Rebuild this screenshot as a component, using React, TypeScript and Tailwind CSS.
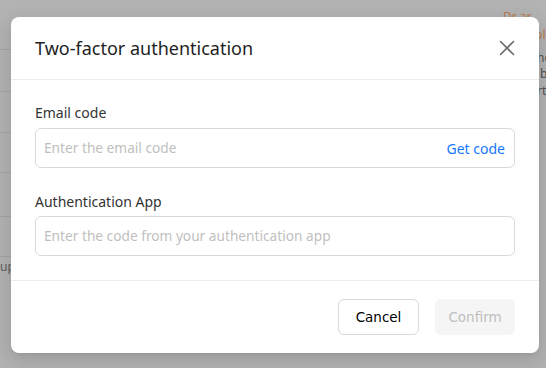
import React from "react";

function CloseIcon() {
  return (
    <svg width="16" height="16" viewBox="0 0 16 16" fill="none">
      <path d="M1.5 1.5 L14.5 14.5 M14.5 1.5 L1.5 14.5" stroke="#6b6b6b" strokeWidth="1.6" strokeLinecap="round" />
    </svg>
  );
}

export default function App() {
  const font = { fontFamily: '"Noto Sans", "Open Sans", Arial, sans-serif' };
  return (
    <div className="relative h-[368px] w-[546px] overflow-hidden bg-[#b3b3b3]" style={font}>
      {/* underlying page, dimmed by the overlay */}
      <div className="absolute inset-0">
        <div className="absolute left-0 top-[49px] h-px w-[12px] bg-[#a3a3a3]" />
        <div className="absolute left-0 top-[91px] h-px w-[12px] bg-[#a3a3a3]" />
        <div className="absolute left-0 top-[132px] h-px w-[12px] bg-[#a3a3a3]" />
        <div className="absolute left-0 top-[172px] h-px w-[12px] bg-[#a3a3a3]" />
        <div className="absolute left-0 top-[216px] h-px w-[12px] bg-[#a3a3a3]" />
        <div className="absolute left-0 top-[256px] h-px w-[12px] bg-[#a3a3a3]" />
        <span className="absolute left-0 top-[259px] text-[12px] leading-[16px] text-[#5c5c5c]">up</span>
        <span className="absolute left-[503px] top-[9px] text-[12px] leading-[16px] text-[#b87a4a]">Dr ar</span>
        <span className="absolute left-[535px] top-[27px] text-[12px] leading-[16px] text-[#b87a4a]">pl</span>
        <span className="absolute left-[537px] top-[50px] text-[12px] leading-[16px] text-[#4f4f4f]">he</span>
        <span className="absolute left-[540px] top-[66px] text-[12px] leading-[16px] text-[#4f4f4f]">b</span>
        <span className="absolute left-[537px] top-[83px] text-[12px] leading-[16px] text-[#4f4f4f]">rt</span>
      </div>

      {/* modal */}
      <div className="relative ml-[11px] mt-[17px] flex h-[336px] w-[528px] flex-col rounded-[8px] bg-white shadow-[0_6px_16px_0_rgba(0,0,0,0.08),0_3px_6px_-4px_rgba(0,0,0,0.12),0_9px_28px_8px_rgba(0,0,0,0.05)]">
        <div className="flex h-[63px] items-center justify-between border-b border-[#ececec] pl-[24px] pr-[24px]">
          <span className="text-[18px] leading-[24px] text-[#1f1f1f]">Two-factor authentication</span>
          <button className="flex h-[16px] w-[16px] items-center justify-center">
            <CloseIcon />
          </button>
        </div>

        <div className="flex flex-col px-[24px] pt-[22px] pb-[24px]">
          <label className="text-[14px] leading-[22px] text-[#333333]">Email code</label>
          <div className="mt-[4px] flex h-[40px] items-center justify-between rounded-[6px] border border-[#d9d9d9] pl-[8px] pr-[9px]">
            <span className="text-[13.7px] text-[#bfbfbf]">Enter the email code</span>
            <span className="text-[14px] text-[#1677ff]">Get code</span>
          </div>

          <label className="mt-[23px] text-[14px] leading-[22px] text-[#333333]">Authentication App</label>
          <div className="mt-[3px] flex h-[40px] items-center rounded-[6px] border border-[#d9d9d9] pl-[8px]">
            <span className="text-[13.7px] text-[#bfbfbf]">Enter the code from your authentication app</span>
          </div>
        </div>

        <div className="flex flex-1 items-start justify-end gap-[16px] border-t border-[#ececec] px-[24px] pt-[18px]">
          <button className="h-[36px] w-[81px] rounded-[6px] border border-[#d9d9d9] bg-white text-[14px] text-[#000000]" style={{ fontFamily: '"DejaVu Sans", "Noto Sans", sans-serif', fontSize: 13.5 }}>
            Cancel
          </button>
          <button className="h-[36px] w-[80px] rounded-[6px] bg-[#f5f5f5] text-[14px] text-[#bfbfbf]" style={{ fontFamily: '"DejaVu Sans", "Noto Sans", sans-serif', fontSize: 13.5 }}>
            Confirm
          </button>
        </div>
      </div>
    </div>
  );
}
